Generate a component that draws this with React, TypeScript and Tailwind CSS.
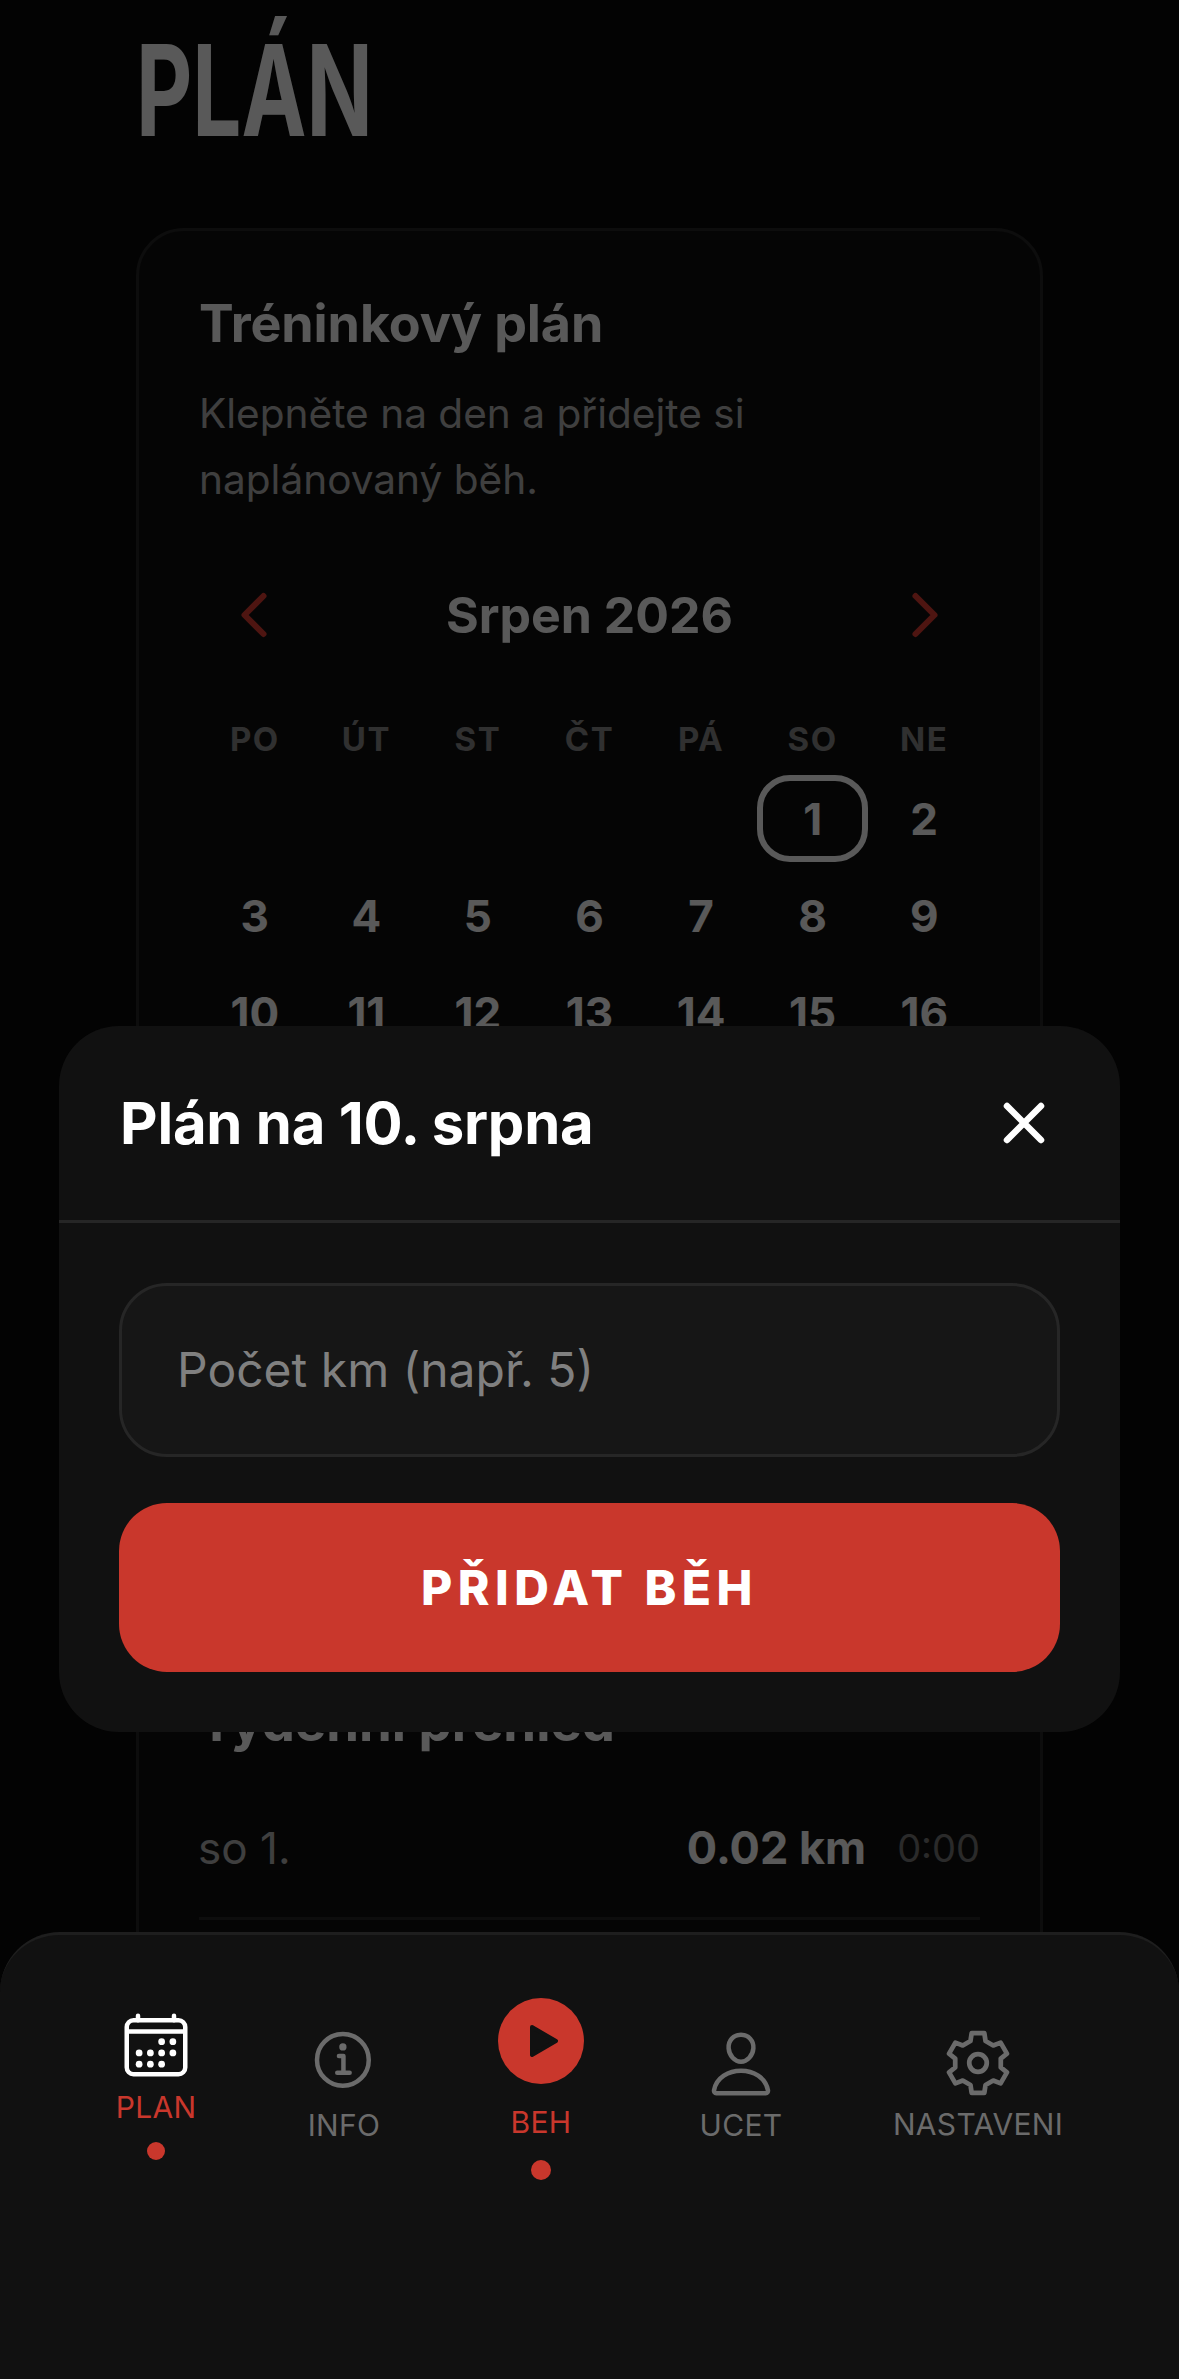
import { IoCalendarOutline, IoInformationCircleOutline, IoPersonOutline } from 'react-icons/io5';

const WEEKDAYS = ['PO', 'ÚT', 'ST', 'ČT', 'PÁ', 'SO', 'NE'];
const DAYS: (number | null)[] = [
  null, null, null, null, null, 1, 2,
  3, 4, 5, 6, 7, 8, 9,
  10, 11, 12, 13, 14, 15, 16,
  17, 18, 19, 20, 21, 22, 23,
  24, 25, 26, 27, 28, 29, 30,
  31,
];

// six-tooth gear outline, nothing in the icon packages has this exact shape
function gearPath() {
  const pts: string[] = [];
  for (let i = 0; i < 6; i++) {
    const a = -90 + 60 * i;
    const teeth: [number, number][] = [
      [22.5, a - 19],
      [29.5, a - 12],
      [29.5, a + 12],
      [22.5, a + 19],
    ];
    teeth.forEach(([r, deg]) => {
      const rad = (deg * Math.PI) / 180;
      pts.push(`${(32 + r * Math.cos(rad)).toFixed(2)} ${(32 + r * Math.sin(rad)).toFixed(2)}`);
    });
  }
  return `M${pts.join('L')}Z`;
}

function GearIcon() {
  return (
    <svg width="66" height="66" viewBox="0 0 64 64" fill="none" stroke="currentColor" strokeWidth="4.6" strokeLinejoin="round">
      <path d={gearPath()} />
      <circle cx="32" cy="32" r="8.5" />
    </svg>
  );
}

function BehindPage() {
  return (
    <div className="px-[136px]">
      <h1 className="origin-left scale-x-[0.69] pt-[20px] text-[126px] leading-[140px] font-bold text-white">PLÁN</h1>
      <div className="mt-[68px] rounded-[48px] border-[3px] border-[#262626] bg-[#111111] px-[60px] pt-[60px] pb-[120px]">
        <h2 className="text-[52px] leading-[66px] font-bold tracking-[-0.1px] text-white">Tréninkový plán</h2>
        <p className="mt-[24px] w-[640px] text-[40.6px] leading-[66px] text-[#b5b5b5]">Klepněte na den a přidejte si naplánovaný běh.</p>

        <div className="mt-[69px] flex items-center justify-between px-[40px]">
          <svg width="30" height="50" viewBox="0 0 30 50" fill="none" stroke="#e03c31" strokeWidth="6" strokeLinecap="round" strokeLinejoin="round">
            <path d="M24.5 6 5.5 25l19 19" />
          </svg>
          <span className="text-[50px] leading-[66px] font-bold text-white">Srpen 2026</span>
          <svg width="30" height="50" viewBox="0 0 30 50" fill="none" stroke="#e03c31" strokeWidth="6" strokeLinecap="round" strokeLinejoin="round">
            <path d="m5.5 6 19 19-19 19" />
          </svg>
        </div>

        <div className="mt-[70px] grid grid-cols-7">
          {WEEKDAYS.map((d) => (
            <span key={d} className="text-center text-[33px] leading-[42px] font-bold tracking-[1.5px] text-[#8a8a8a]">{d}</span>
          ))}
        </div>
        <div className="mt-[15px] grid grid-cols-7 gap-y-[10px]">
          {DAYS.map((d, i) => (
            <div key={i} className="flex h-[87px] items-center justify-center">
              {d === 1 ? (
                <span className="flex h-[87px] w-[111px] items-center justify-center rounded-[33px] border-[6px] border-[#ffffff] text-[44px] font-bold text-white">{d}</span>
              ) : (
                <span className="text-[44px] font-bold text-white">{d}</span>
              )}
            </div>
          ))}
        </div>

        <h2 className="mt-[342px] text-[52.7px] leading-[66px] font-bold text-white">Týdenní přehled</h2>
        <div className="mt-[66px] flex items-center border-b-[3px] border-[#262626] pb-[42px]">
          <span className="ml-[-1px] flex-1 text-[44px] leading-[54px] text-[#b5b5b5]">so 1.</span>
          <span className="text-[45px] leading-[54px] font-bold text-white">0.02 km</span>
          <span className="ml-[31px] text-[38px] leading-[54px] text-[#7a7a7a]">0:00</span>
        </div>
      </div>
    </div>
  );
}

function NavItem({ label, active, className, icon, dotClass }: { label: string; active?: boolean; className: string; icon: React.ReactNode; dotClass?: string }) {
  return (
    <div className={`flex flex-col items-center ${className}`}>
      {icon}
      <span className={`text-[30px] leading-[36px] tracking-[0.3px] ${active ? 'text-[#c9372c]' : 'text-[#6b6b6b]'}`}>{label}</span>
      {dotClass && <span className={`rounded-full bg-[#c9372c] ${dotClass}`} />}
    </div>
  );
}

export default function App() {
  return (
    <div className="relative h-[2379px] w-[1179px] overflow-hidden bg-[#0a0a0a] font-['Inter',sans-serif]">
      <BehindPage />

      {/* dimmed backdrop + sheet */}
      <div className="absolute inset-0 bg-black/65" />
      <div className="absolute top-[1026px] left-[59px] w-[1061px] rounded-[60px] bg-[#111111]">
        <div className="flex h-[197px] items-center justify-between border-b-[3px] border-[#262626] pr-[72px] pl-[61px]">
          <span className="text-[58px] font-bold tracking-[-0.2px] text-white">Plán na 10. srpna</span>
          <svg width="48" height="48" viewBox="0 0 48 48" fill="none" stroke="white" strokeWidth="6.5" strokeLinecap="round">
            <path d="M7 7l34 34M41 7 7 41" />
          </svg>
        </div>
        <div className="flex flex-col gap-[46px] px-[60px] pt-[60px] pb-[60px]">
          <div className="flex h-[174px] items-center rounded-[48px] border-[3px] border-[#262626] bg-[#161616] px-[55px]">
            <span className="text-[48px] text-[#808080]">Počet km (např. 5)</span>
          </div>
          <button className="h-[169px] rounded-[48px] bg-[#c9372c] text-[48px] font-extrabold tracking-[5.5px] text-white">PŘIDAT BĚH</button>
        </div>
      </div>

      {/* tab bar */}
      <nav className="absolute inset-x-0 bottom-0 flex h-[447px] items-start rounded-t-[60px] border-t-[3px] border-[#1e1e1e] bg-[#111111] pt-[63px] pl-[96px]">
        <NavItem label="PLAN" active dotClass="mt-[17px] h-[18px] w-[18px]" className="mt-[11px] w-[120px]" icon={<IoCalendarOutline size={72} className="mb-[8px] text-white" />} />
        <NavItem label="INFO" className="mt-[27px] ml-[68px] w-[120px]" icon={<IoInformationCircleOutline size={72} className="mb-[10px] text-[#6b6b6b]" />} />
        <NavItem
          label="BEH"
          active
          dotClass="mt-[20px] h-[20px] w-[20px]"
          className="ml-[77px] w-[120px]"
          icon={
            <span className="mb-[20px] flex h-[86px] w-[86px] items-center justify-center rounded-full bg-[#c9372c]">
              <svg width="30" height="34" viewBox="0 0 30 34" className="ml-[5px]" fill="#111111">
                <path d="M3 3 27 17 3 31Z" stroke="#111111" strokeWidth="4" strokeLinejoin="round" />
              </svg>
            </span>
          }
        />
        <NavItem label="UCET" className="mt-[30px] ml-[80px] w-[120px]" icon={<IoPersonOutline size={72} className="mb-[7px] text-[#6b6b6b]" />} />
        <NavItem label="NASTAVENI" className="mt-[32px] ml-[87px] w-[180px]" icon={<span className="mb-[10px] text-[#6b6b6b]"><GearIcon /></span>} />
      </nav>
    </div>
  );
}
